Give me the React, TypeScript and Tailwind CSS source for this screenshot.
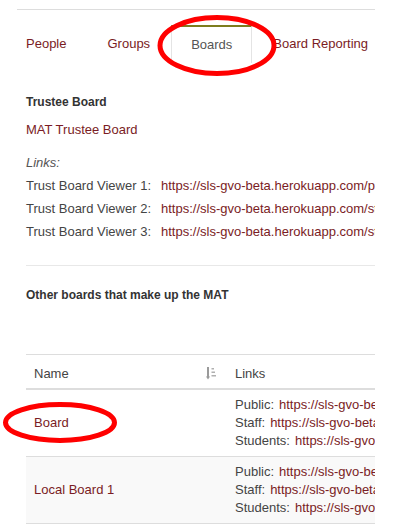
import React from "react";

const linkColor = "text-[#7a1c24]";

function SortIcon() {
  return (
    <svg width="10" height="13" viewBox="0 0 10 13" className="block">
      <rect x="1" y="0" width="2" height="10" fill="#9a9a9a" />
      <path d="M0 9.5 L4 9.5 L2 12.5 Z" fill="#9a9a9a" />
      <rect x="5.5" y="1" width="2.5" height="1.5" fill="#b0b0b0" />
      <rect x="5.5" y="4.5" width="3.5" height="1.5" fill="#b0b0b0" />
      <rect x="5.5" y="8" width="4.5" height="1.5" fill="#b0b0b0" />
    </svg>
  );
}

function BoardRow({ name, striped }: { name: string; striped?: boolean }) {
  const links = [
    { label: "Public:", url: "https://sls-gvo-beta.herokuapp.com/public/boards/" },
    { label: "Staff:", url: "https://sls-gvo-beta.herokuapp.com/staff/boards/" },
    { label: "Students:", url: "https://sls-gvo-beta.herokuapp.com/students/boards/" },
  ];
  return (
    <div className={`flex border-b border-[#ddd] ${striped ? "bg-[#f9f9f9]" : "bg-white"}`}>
      <div className={`w-[201px] shrink-0 pl-[8px] flex items-center ${linkColor}`}>{name}</div>
      <div className="pl-[8px] py-[6px] leading-[18px] whitespace-nowrap">
        {links.map((l) => (
          <div key={l.label}>
            <span>{l.label}</span>
            <span className={`ml-[5px] ${linkColor}`}>{l.url}</span>
          </div>
        ))}
      </div>
    </div>
  );
}

export default function App() {
  const tabs = ["People", "Groups", "Boards", "Board Reporting"];

  return (
    <div className="relative w-[408px] h-[524px] bg-white overflow-hidden font-['Liberation_Sans',Arial,sans-serif] text-[13px] text-[#444]">
      <div className="w-[375px] overflow-hidden pt-[9px]">
        <div className="ml-[17px] h-px bg-[#ddd]" />

        {/* Tabs */}
        <div className="mt-[15px] flex pl-[6px] h-[38px] whitespace-nowrap">
          {tabs.map((t) =>
            t === "Boards" ? (
              <div
                key={t}
                className="flex items-center px-[19px] mr-[1px] border-x border-[#e4e4e4] border-t-2 border-t-[#7d7d1e] text-[#555] bg-white"
              >
                {t}
              </div>
            ) : (
              <div key={t} className={`flex items-center px-[20px] mr-[1px] ${linkColor}`}>
                {t}
              </div>
            )
          )}
        </div>

        <div className="pl-[26px]">
          <div className="mt-[30px] leading-[18px] font-bold text-[12px] text-[#333]">Trustee Board</div>
          <div className={`mt-[10px] leading-[18px] ${linkColor}`}>MAT Trustee Board</div>

          <div className="mt-[15px] leading-[18px] italic text-[#555]">Links:</div>
          <div className="mt-[2px] leading-[23px] whitespace-nowrap">
            {[
              "https://sls-gvo-beta.herokuapp.com/public/trust-board/",
              "https://sls-gvo-beta.herokuapp.com/staff/trust-board/",
              "https://sls-gvo-beta.herokuapp.com/students/trust-board/",
            ].map((url, i) => (
              <div key={url} className="flex">
                <span className="w-[135px] shrink-0">Trust Board Viewer {i + 1}:</span>
                <span className={linkColor}>{url}</span>
              </div>
            ))}
          </div>

          <div className="mt-[22px] h-px bg-[#e8e8e8]" />

          <div className="mt-[20px] leading-[18px] font-bold text-[12px] text-[#333]">
            Other boards that make up the MAT
          </div>

          {/* Table */}
          <div className="mt-[50px] border-t border-[#ddd]">
            <div className="flex h-[35px] border-b-2 border-[#ddd] leading-[18px]">
              <div className="w-[201px] shrink-0 pl-[8px] pr-[11px] pt-[10px] flex justify-between">
                <span>Name</span>
                <span className="pt-[2px]">
                  <SortIcon />
                </span>
              </div>
              <div className="pl-[8px] pt-[10px]">Links</div>
            </div>
            <BoardRow name="Board" />
            <BoardRow name="Local Board 1" striped />
          </div>
        </div>
      </div>

      {/* Red highlight ellipses */}
      <svg className="absolute left-0 top-0 pointer-events-none" width="408" height="524">
        <ellipse cx="217" cy="45.5" rx="57" ry="28" fill="none" stroke="#f00" strokeWidth="5" />
        <ellipse cx="60" cy="422.5" rx="54.5" ry="18" fill="none" stroke="#f00" strokeWidth="5" />
      </svg>
    </div>
  );
}
